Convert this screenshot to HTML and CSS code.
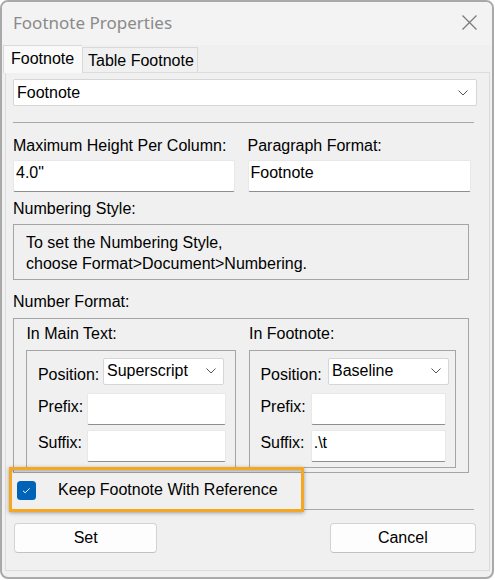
FILE: index.html
```html
<!DOCTYPE html>
<html>
<head>
<meta charset="utf-8">
<link rel="stylesheet" href="styles.css">
</head>
<body>
<div class="window">
  <div class="titlebar">
    <span class="title">Footnote Properties</span>
    <svg class="close" width="15" height="15" viewBox="0 0 15 15"><path d="M0.5 0.5 L14.5 14.5 M14.5 0.5 L0.5 14.5" stroke="#7b7b7b" stroke-width="1.3" fill="none"/></svg>
  </div>
  <div class="tabs">
    <div class="tab active">Footnote</div>
    <div class="tab">Table Footnote</div>
  </div>
  <div class="panel">
    <div class="select wide"><span>Footnote</span><svg class="chev" width="10" height="6" viewBox="0 0 10 6"><path d="M0.5 0.5 L5 5 L9.5 0.5" stroke="#555" stroke-width="1" fill="none"/></svg></div>
    <div class="sep sep-top"></div>
    <div class="pair labels"><span>Maximum Height Per Column:</span><span>Paragraph Format:</span></div>
    <div class="pair"><div class="input big">4.0"</div><div class="input big">Footnote</div></div>
    <div class="label num-label">Numbering Style:</div>
    <div class="infobox">To set the Numbering Style,<br>choose Format&gt;Document&gt;Numbering.</div>
    <div class="label nf-label">Number Format:</div>
    <div class="group">
      <div class="col col-main">
        <div class="col-label">In Main Text:</div>
        <div class="subbox">
          <div class="row row-pos"><span class="lbl">Position:</span><div class="select small"><span>Superscript</span><svg class="chev" width="10" height="6" viewBox="0 0 10 6"><path d="M0.5 0.5 L5 5 L9.5 0.5" stroke="#555" stroke-width="1" fill="none"/></svg></div></div>
          <div class="row row-prefix"><span class="lbl">Prefix:</span><div class="input small"></div></div>
          <div class="row row-suffix"><span class="lbl">Suffix:</span><div class="input small"></div></div>
        </div>
      </div>
      <div class="col col-foot">
        <div class="col-label">In Footnote:</div>
        <div class="subbox">
          <div class="row row-pos"><span class="lbl">Position:</span><div class="select small"><span>Baseline</span><svg class="chev" width="10" height="6" viewBox="0 0 10 6"><path d="M0.5 0.5 L5 5 L9.5 0.5" stroke="#555" stroke-width="1" fill="none"/></svg></div></div>
          <div class="row row-prefix"><span class="lbl">Prefix:</span><div class="input small"></div></div>
          <div class="row row-suffix"><span class="lbl">Suffix:</span><div class="input small">.\t</div></div>
        </div>
      </div>
    </div>
    <div class="check-row">
      <span class="checkbox"><svg width="19" height="19" viewBox="0 0 19 19"><path d="M6 9.8 L8.2 11.8 L12.6 7.4" stroke="#fff" stroke-width="1" fill="none"/></svg></span>
      <span class="check-label">Keep Footnote With Reference</span>
      <div class="highlight"></div>
    </div>
    <div class="sep sep-bottom"></div>
    <div class="buttons">
      <button class="btn btn-set">Set</button>
      <button class="btn btn-cancel">Cancel</button>
    </div>
  </div>
</div>
</body>
</html>
```
FILE: styles.css
```css
* { box-sizing: border-box; }
html, body { margin: 0; padding: 0; background: #ffffff; }
body {
  font-family: "Liberation Sans", Arial, sans-serif;
  font-size: 16px;
  line-height: 18px;
  color: #000;
}
.window {
  width: 494px;
  height: 579px;
  border: 2px solid #a9a9a9;
  border-radius: 8px;
  overflow: hidden;
  background: #f0f0f0;
  display: flex;
  flex-direction: column;
}
.titlebar {
  height: 43px;
  flex: none;
  background: #f3f3f3;
  display: flex;
  align-items: center;
  justify-content: space-between;
  padding: 0 15px 0 11px;
}
.title {
  font-family: "Noto Sans", "Open Sans", sans-serif;
  font-size: 17px;
  color: #8a8a8a;
  line-height: 20px;
  margin-top: -1px;
}
.close { display: block; margin-top: -3px; }
.tabs {
  height: 27px;
  flex: none;
  display: flex;
  align-items: flex-end;
  padding-left: 1px;
  position: relative;
  z-index: 1;
}
.tab {
  border: 1px solid #d9d9d9;
  border-bottom: none;
  height: 25px;
  padding: 4px 0 0 5px;
  width: 116px;
  background: #f0f0f0;
}
.tab.active {
  height: 28px;
  margin-bottom: -1px;
  width: 79px;
  background: #f9f9f9;
  padding: 4px 0 0 7px;
  border-right: none;
}
.panel {
  flex: 1;
  margin: 0 2px 6px 3px;
  border: 1px solid #dcdcdc;
  padding: 6px 12px 0 7px;
}
.select {
  background: #fff;
  border: 1px solid #d6d6d6;
  border-radius: 2px;
  display: flex;
  align-items: center;
  justify-content: space-between;
  padding-left: 3px;
}
.select.wide { height: 27px; padding-right: 8px; }
.select.small { height: 27px; width: 121px; padding-right: 7px; }
.chev { display: block; flex: none; }
.sep { height: 1px; background: #a7a7a7; width: 461px; }
.sep-top { margin-top: 16px; }
.pair {
  display: grid;
  grid-template-columns: 222px 223px;
  column-gap: 12.5px;
}
.labels { margin-top: 13.5px; margin-bottom: 5px; }
.input {
  background: #fff;
  border: 1px solid #e8e8e8;
  border-bottom-color: #8e8e8e;
  border-radius: 2px;
}
.input.big { height: 32px; padding: 3.5px 0 0 2px; }
.input.small { height: 32px; width: 138px; padding: 2.5px 0 0 2px; }
.num-label { margin-top: 8.5px; }
.infobox {
  margin-top: 6px;
  width: 456px;
  border: 1px solid #a5a5a5;
  padding: 6.7px 0 5.3px 12px;
  line-height: 21px;
}
.nf-label { margin-top: 12.8px; }
.group {
  margin-top: 7px;
  width: 456px;
  border: 1px solid #a5a5a5;
  padding: 6px 0 4px 12.4px;
  display: grid;
  grid-template-columns: 210px 207.4px;
  column-gap: 12.6px;
}
.col-label { margin-bottom: 7px; }
.subbox {
  border: 1px solid #a5a5a5;
  padding: 7px 0 5px 10.5px;
}
.row { display: flex; }
.row-pos { align-items: flex-end; height: 27px; }
.row-pos .lbl { margin-bottom: 0.5px; }
.row-prefix { align-items: center; margin-top: 8px; }
.row-suffix { align-items: center; margin-top: 5.5px; }
.row-prefix .lbl { padding-bottom: 3px; }
.row-suffix .lbl { padding-bottom: 6px; }
.row-suffix .input.small { height: 31.5px; }
.row .select, .row .input { margin-left: auto; }
.col-main .row-pos .select { margin-right: 11.4px; }
.col-main .input.small { margin-right: 9.7px; width: 138.3px; }
.col-foot .subbox { padding-left: 10.4px; }
.col-foot .row-pos .select { margin-right: 6.4px; }
.col-foot .input.small { margin-right: 9.7px; width: 135px; }
.check-row {
  position: relative;
  margin-top: 8.2px;
  height: 19px;
  display: flex;
  align-items: center;
  padding-left: 4.3px;
}
.checkbox {
  width: 19px;
  height: 19px;
  border-radius: 3.5px;
  background: #0063b8;
  display: block;
  flex: none;
}
.checkbox svg { display: block; }
.check-label { margin-left: 21.7px; }
.highlight {
  position: absolute;
  left: -3.7px;
  top: -14.3px;
  width: 295px;
  height: 45px;
  border: 3px solid #f5a623;
  box-shadow: 0 1px 4px rgba(0, 0, 0, 0.35), inset 0 3px 2px -1px rgba(0, 0, 0, 0.22);
  pointer-events: none;
}
.sep-bottom { margin-top: 9.3px; }
.buttons {
  margin-top: 13px;
  display: flex;
  justify-content: space-between;
  width: 463px;
  padding-left: 1px;
}
.btn {
  font-family: "Liberation Sans", Arial, sans-serif;
  font-size: 16px;
  color: #000;
  height: 30px;
  background: #fdfdfd;
  border: 1px solid #d3d3d3;
  border-bottom-color: #c2c2c2;
  border-radius: 4px;
  padding: 0;
  line-height: 18px;
}
.btn-set { width: 143.4px; }
.btn-cancel { width: 146.4px; }
```
